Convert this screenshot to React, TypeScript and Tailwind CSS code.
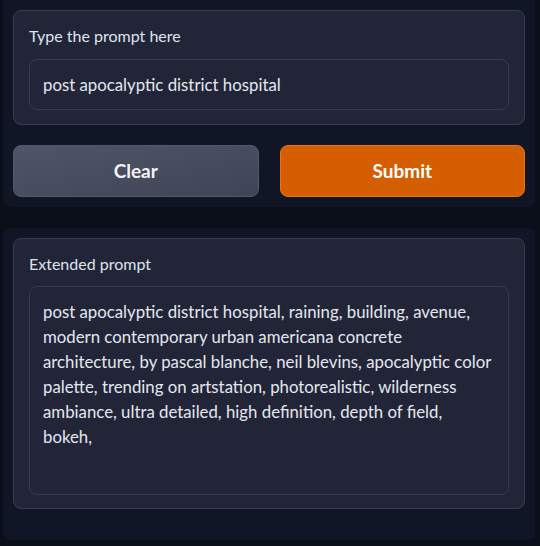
const EXTENDED = [
  "post apocalyptic district hospital, raining, building, avenue,",
  "modern contemporary urban americana concrete",
  "architecture, by pascal blanche, neil blevins, apocalyptic color",
  "palette, trending on artstation, photorealistic, wilderness",
  "ambiance, ultra detailed, high definition, depth of field,",
  "bokeh,",
].join("\n");

export default function App() {
  return (
    <div className="min-h-[546px] bg-[#0b0f19] px-[3px] font-['Lato',sans-serif] text-[16px]">
      {/* Input panel */}
      <div className="w-[532px] rounded-b-lg bg-[#111626] px-[10px] pt-[10px] pb-[10px]">
        <div className="rounded-lg border border-[#373c4f] bg-[#212537] px-[15px] pt-[15px] pb-[14px]">
          <div className="mb-[13px] h-5 leading-5 text-[#dfe3ec]">Type the prompt here</div>
          <input
            readOnly
            value="post apocalyptic district hospital"
            className="block h-[51px] w-full rounded-lg border border-[#373c4f] bg-[#212537] px-[13px] text-[16.8px] leading-[25px] text-[#e4e7ef] outline-none"
          />
        </div>
        <div className="mt-5 grid grid-cols-2 gap-[21px]">
          <button className="h-[52px] rounded-lg border border-[#545a6b] bg-gradient-to-br from-[#4f5567] to-[#3f4456] text-[19px] font-bold text-[#f3f4f6]">
            Clear
          </button>
          <button className="h-[52px] rounded-lg border border-[#ea7612] bg-[#d45e00] text-[19px] font-bold text-white">
            Submit
          </button>
        </div>
      </div>

      {/* Output panel */}
      <div className="mt-[21px] w-[532px] rounded-lg bg-[#111626] px-[10px] pt-[10px] pb-[31px]">
        <div className="rounded-lg border border-[#373c4f] bg-[#212537] px-[15px] pt-[15px] pb-[13px]">
          <div className="mb-3 h-5 leading-5 text-[#dfe3ec]">Extended prompt</div>
          <textarea
            readOnly
            value={EXTENDED}
            className="block h-[209px] w-full resize-none overflow-hidden rounded-lg border border-[#373c4f] bg-[#212537] px-[13px] py-3 text-[16.8px] leading-[25px] text-[#e4e7ef] outline-none"
          />
        </div>
      </div>
    </div>
  );
}
